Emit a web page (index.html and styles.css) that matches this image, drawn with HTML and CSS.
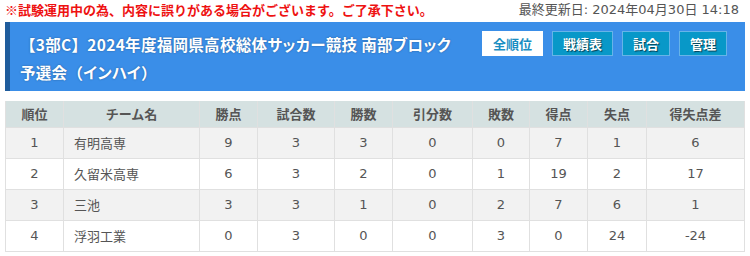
FILE: index.html
```html
<!DOCTYPE html>
<html lang="ja">
<head>
<meta charset="utf-8">
<link rel="stylesheet" href="styles.css">
</head>
<body>
<div class="page">
  <div class="topbar">
    <p class="notice">※試験運用中の為、内容に誤りがある場合がございます。ご了承下さい。</p>
    <p class="updated">最終更新日: 2024年04月30日 14:18</p>
  </div>
  <div class="banner">
    <h1 class="title"><span class="br">【</span>3部C<span class="br">】</span>2024年度福岡県高校総体サッカー競技 南部ブロック<br>予選会<span class="br">（</span>インハイ<span class="br">）</span></h1>
    <nav class="tabs">
      <a class="tab active">全順位</a>
      <a class="tab">戦績表</a>
      <a class="tab">試合</a>
      <a class="tab">管理</a>
    </nav>
  </div>
  <table class="standings">
    <colgroup>
      <col class="c-rank"><col class="c-team"><col class="c-pts"><col class="c-gp"><col class="c-w"><col class="c-d"><col class="c-l"><col class="c-gf"><col class="c-ga"><col class="c-gd">
    </colgroup>
    <thead>
      <tr><th>順位</th><th>チーム名</th><th>勝点</th><th>試合数</th><th>勝数</th><th>引分数</th><th>敗数</th><th>得点</th><th>失点</th><th>得失点差</th></tr>
    </thead>
    <tbody>
      <tr><td>1</td><td class="team">有明高専</td><td>9</td><td>3</td><td>3</td><td>0</td><td>0</td><td>7</td><td>1</td><td>6</td></tr>
      <tr><td>2</td><td class="team">久留米高専</td><td>6</td><td>3</td><td>2</td><td>0</td><td>1</td><td>19</td><td>2</td><td>17</td></tr>
      <tr><td>3</td><td class="team">三池</td><td>3</td><td>3</td><td>1</td><td>0</td><td>2</td><td>7</td><td>6</td><td>1</td></tr>
      <tr><td>4</td><td class="team">浮羽工業</td><td>0</td><td>3</td><td>0</td><td>0</td><td>3</td><td>0</td><td>24</td><td>-24</td></tr>
    </tbody>
  </table>
</div>
</body>
</html>
```
FILE: styles.css
```css
* { box-sizing: border-box; }
html, body { margin: 0; padding: 0; background: #fff; }
body {
  font-family: "DejaVu Sans", "Noto Sans CJK JP", sans-serif;
  color: #555;
}
.page { padding: 0 5px; width: 750px; }
.topbar {
  display: flex;
  justify-content: space-between;
  align-items: center;
  height: 22px;
  padding-bottom: 3px;
}
.topbar p { margin: 0; font-size: 13px; line-height: 18px; }
.notice {
  color: #ee1111;
  font-weight: bold;
  font-family: "Noto Sans CJK JP", sans-serif;
}
.updated { color: #555; padding-right: 6px; }
.banner {
  display: flex;
  justify-content: space-between;
  align-items: flex-start;
  height: 69px;
  background: #3a8ee8;
  border-left: 5px solid #1f5c9c;
  padding: 8px 18px 5px 10px;
}
.title {
  margin: 0;
  font-size: 15.5px;
  line-height: 28px;
  font-weight: bold;
  color: #fff;
  text-shadow: 0 0 2px rgba(0,0,0,0.35);
  font-family: "Noto Sans CJK JP", sans-serif;
  font-feature-settings: "palt";
  letter-spacing: 0.3px;
}
.title .br { font-feature-settings: normal; }
.tabs { display: flex; gap: 9px; margin-top: 1px; }
.tab {
  display: flex;
  align-items: center;
  justify-content: center;
  height: 25px;
  padding: 0 10px;
  background: #0898c8;
  border: 1px solid #66b4e8;
  color: #fff;
  font-size: 13px;
  font-weight: bold;
  font-family: "Noto Sans CJK JP", sans-serif;
  text-shadow: 1px 1px 1px rgba(0,0,0,0.6);
}
.tab.active {
  background: #fff;
  border-color: #fff;
  color: #1a8ec2;
  text-shadow: none;
}
.standings {
  margin-top: 10px;
  width: 739px;
  border-collapse: collapse;
  table-layout: fixed;
  font-size: 13px;
}
.c-rank { width: 58px; }
.c-team { width: 136px; }
.c-pts { width: 58px; }
.c-gp { width: 77px; }
.c-w { width: 58px; }
.c-d { width: 80px; }
.c-l { width: 57px; }
.c-gf { width: 58px; }
.c-ga { width: 59px; }
.c-gd { width: 98px; }
.standings th, .standings td {
  border: 1px solid #e0e0e0;
  text-align: center;
  padding: 0;
}
.standings th {
  height: 26px;
  background: #d5e1e1;
  font-weight: bold;
  color: #555;
  font-family: "Noto Sans CJK JP", sans-serif;
  border-top: 0;
}
.standings td { height: 31px; color: #555; }
.standings tbody tr:nth-child(odd) td { background: #f2f2f2; }
.standings td.team {
  text-align: left;
  padding-left: 10px;
  font-family: "Noto Sans CJK JP", sans-serif;
}
```
